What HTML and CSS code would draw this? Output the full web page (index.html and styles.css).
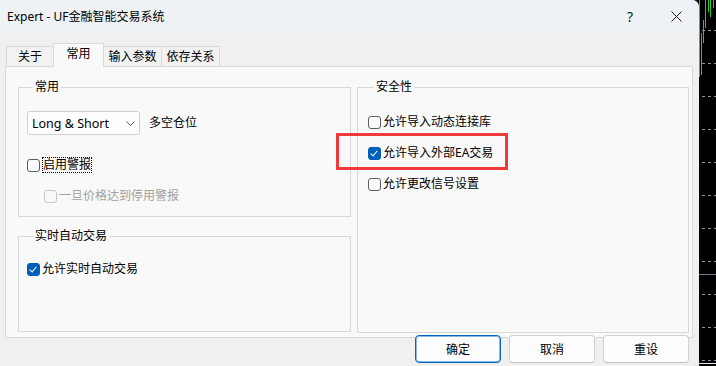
FILE: index.html
```html
<!DOCTYPE html>
<html lang="zh-CN">

<head>
    <meta charset="UTF-8">
    <title>Expert - UF金融智能交易系统</title>
    <link rel="stylesheet" href="styles.css">
</head>

<body>
    <div class="desk">
        <div class="dialog">
            <div class="titlebar">
                <span class="title">Expert - UF金融智能交易系统</span>
                <span class="caption-btn help">?</span>
                <span class="caption-btn close">
                    <svg width="11" height="11" viewBox="0 0 11 11">
                        <path d="M0.5 0.5 L10.5 10.5 M10.5 0.5 L0.5 10.5" stroke="#1a1a1a" stroke-width="1" fill="none"/>
                    </svg>
                </span>
            </div>

            <div class="tabs">
                <div class="tab tab-about">关于</div>
                <div class="tab active">常用</div>
                <div class="tab tab-wide">输入参数</div>
                <div class="tab tab-wide">依存关系</div>
            </div>

            <div class="panel">
                <div class="col-left">
                    <fieldset class="group group-common">
                        <legend>常用</legend>
                        <div class="pos-row">
                            <div class="dropdown">
                                <span>Long &amp; Short</span>
                                <svg width="9" height="5" viewBox="0 0 9 5">
                                    <path d="M0.5 0.5 L4.5 4.5 L8.5 0.5" stroke="#5c5c5c" stroke-width="1" fill="none"/>
                                </svg>
                            </div>
                            <span class="pos-label">多空仓位</span>
                        </div>
                        <label class="check check-alert">
                            <span class="box"></span>
                            <span class="focus">启用警报</span>
                        </label>
                        <label class="check check-sub disabled">
                            <span class="box"></span>
                            <span>一旦价格达到停用警报</span>
                        </label>
                    </fieldset>

                    <fieldset class="group group-auto">
                        <legend>实时自动交易</legend>
                        <label class="check check-auto">
                            <span class="box checked"></span>
                            <span>允许实时自动交易</span>
                        </label>
                    </fieldset>
                </div>

                <fieldset class="group group-security">
                    <legend>安全性</legend>
                    <label class="check">
                        <span class="box"></span>
                        <span>允许导入动态连接库</span>
                    </label>
                    <label class="check">
                        <span class="box checked"></span>
                        <span>允许导入外部EA交易</span>
                    </label>
                    <label class="check">
                        <span class="box"></span>
                        <span>允许更改信号设置</span>
                    </label>
                </fieldset>
            </div>

            <div class="buttons">
                <button class="btn default">确定</button>
                <button class="btn">取消</button>
                <button class="btn">重设</button>
            </div>
        </div>

        <div class="chart">
            <svg width="17" height="366" viewBox="0 0 17 366">
                <g stroke="#8a96a3" stroke-width="1" stroke-dasharray="3 3">
                    <line x1="3" y1="30.5" x2="17" y2="30.5"/>
                    <line x1="3" y1="63.5" x2="17" y2="63.5"/>
                    <line x1="3" y1="96.5" x2="17" y2="96.5"/>
                    <line x1="3" y1="129.5" x2="17" y2="129.5"/>
                    <line x1="3" y1="162.5" x2="17" y2="162.5"/>
                    <line x1="3" y1="195.5" x2="17" y2="195.5"/>
                    <line x1="3" y1="228.5" x2="17" y2="228.5"/>
                    <line x1="3" y1="261.5" x2="17" y2="261.5"/>
                    <line x1="3" y1="294.5" x2="17" y2="294.5"/>
                    <line x1="3" y1="327.5" x2="17" y2="327.5"/>
                    <line x1="3" y1="360.5" x2="17" y2="360.5"/>
                </g>
                <line x1="0" y1="274.5" x2="17" y2="274.5" stroke="#6e7c8a" stroke-width="1"/>
                <line x1="0" y1="363.5" x2="17" y2="363.5" stroke="#e8e8e8" stroke-width="1"/>
                <g stroke="#22d022" stroke-width="1">
                    <line x1="0.5" y1="0" x2="0.5" y2="77"/>
                    <line x1="2.5" y1="33" x2="2.5" y2="75"/>
                    <line x1="4.5" y1="20" x2="4.5" y2="43"/>
                    <line x1="6.5" y1="0" x2="6.5" y2="28"/>
                    <line x1="9.5" y1="0" x2="9.5" y2="12"/>
                    <line x1="11.5" y1="0" x2="11.5" y2="17"/>
                    <line x1="14.5" y1="0" x2="14.5" y2="8"/>
                </g>
            </svg>
        </div>
    </div>

    <!-- annotation box -->
    <div class="highlight"></div>
</body>
</html>
```

FILE: styles.css
```css
* {
    box-sizing: border-box;
}
body {
    margin: 0;
    width: 716px;
    height: 366px;
    overflow: hidden;
    position: relative;
    background: #000;
    font-family: "Noto Sans", "Noto Sans CJK SC", sans-serif;
    font-size: 12px;
    color: #000;
}
.desk {
    display: flex;
    height: 366px;
}
.dialog {
    width: 699px;
    flex: none;
    background: #f0f0f0;
    border-top-right-radius: 7px;
    display: flex;
    flex-direction: column;
}
.titlebar {
    height: 33px;
    flex: none;
    background: #eef2f7;
    border-top-right-radius: 7px;
    display: flex;
    align-items: center;
    padding-left: 7px;
}
.title {
    line-height: 16px;
}
.caption-btn {
    width: 46px;
    height: 33px;
    display: flex;
    align-items: center;
    justify-content: center;
}
.help {
    margin-left: auto;
    font-size: 14px;
    color: #1a1a1a;
}
.tabs {
    height: 33px;
    flex: none;
    display: flex;
    align-items: flex-end;
    padding-left: 6px;
}
.tab {
    height: 20px;
    border: 1px solid #d9d9d9;
    border-bottom: none;
    background: #f2f2f2;
    line-height: 19px;
    text-align: center;
}
.tab-about {
    width: 48px;
}
.tab-wide {
    width: 59px;
    margin-left: -1px;
}
.tab.active {
    width: 51px;
    height: 24px;
    margin-left: -1px;
    margin-bottom: -1px;
    background: #f9f9f9;
    position: relative;
    z-index: 1;
}
.panel {
    height: 272px;
    flex: none;
    margin: 0 6px 0 5px;
    border: 1px solid #d9d9d9;
    background: #f9f9f9;
    display: grid;
    grid-template-columns: 333px 332px;
    column-gap: 6px;
    align-items: start;
    padding: 12px 3px 0 12px;
}
.group {
    margin: 0;
    padding: 0;
    min-width: 0;
    border: 1px solid #d8d8d8;
}
.group legend {
    padding: 0 2px;
    margin-left: 6px;
    line-height: 16px;
}
.group-common {
    height: 138px;
    padding-left: 8px;
}
.group-auto {
    height: 104px;
    margin-top: 11px;
    padding-left: 8px;
}
.group-security {
    height: 254px;
    padding-left: 10px;
}
.pos-row {
    display: flex;
    align-items: center;
    margin-top: 16px;
}
.dropdown {
    width: 113px;
    height: 24px;
    border: 1px solid #cfcfcf;
    border-radius: 3px;
    background: #fefefe;
    display: flex;
    align-items: center;
    justify-content: space-between;
    padding: 0 4px 0 4px;
    font-size: 12.5px;
}
.pos-label {
    margin-left: 9px;
    line-height: 16px;
}
.check {
    display: flex;
    align-items: center;
    height: 16px;
    line-height: 16px;
    margin-top: 15px;
}
.group-security .check:first-of-type {
    margin-top: 19px;
}
.check-alert {
    margin-top: 22px;
}
.check-sub {
    padding-left: 17px;
}
.check-auto {
    margin-top: 17px;
}
.box {
    width: 13px;
    height: 13px;
    flex: none;
    border: 1px solid #5e5e5e;
    border-radius: 3px;
    background: #fbfbfb;
    margin-right: 2px;
    position: relative;
}
.box.checked {
    border-color: #005fb8;
    background: #005fb8;
}
.box.checked::after {
    content: "";
    position: absolute;
    left: 3px;
    top: 1px;
    width: 3px;
    height: 6px;
    border-right: 1px solid #fff;
    border-bottom: 1px solid #fff;
    transform: rotate(40deg);
}
.focus {
    line-height: 14px;
    outline: 1px dotted #000;
    margin-left: 1px;
}
.disabled {
    color: #a0a0a0;
}
.disabled .box {
    border-color: #c6c6c6;
    background: transparent;
}
.buttons {
    display: flex;
    justify-content: flex-end;
    gap: 8px;
    padding-right: 10px;
    margin-top: -3px;
}
.btn {
    width: 86px;
    height: 28px;
    border: 1px solid #d0d0d0;
    border-bottom-color: #c0c0c0;
    border-radius: 4px;
    background: #fdfdfd;
    font-family: "Noto Sans", "Noto Sans CJK SC", sans-serif;
    font-size: 12px;
    color: #000;
    padding: 0;
}
.btn.default {
    border-color: #0067c0;
    box-shadow: inset 0 0 0 1px rgba(0, 103, 192, 0.45);
}
.chart {
    flex: 1;
    background: #000;
}
.chart svg {
    display: block;
}
.highlight {
    position: absolute;
    left: 336px;
    top: 133px;
    width: 172px;
    height: 37px;
    border: 3px solid #ee3a3a;
}
```
